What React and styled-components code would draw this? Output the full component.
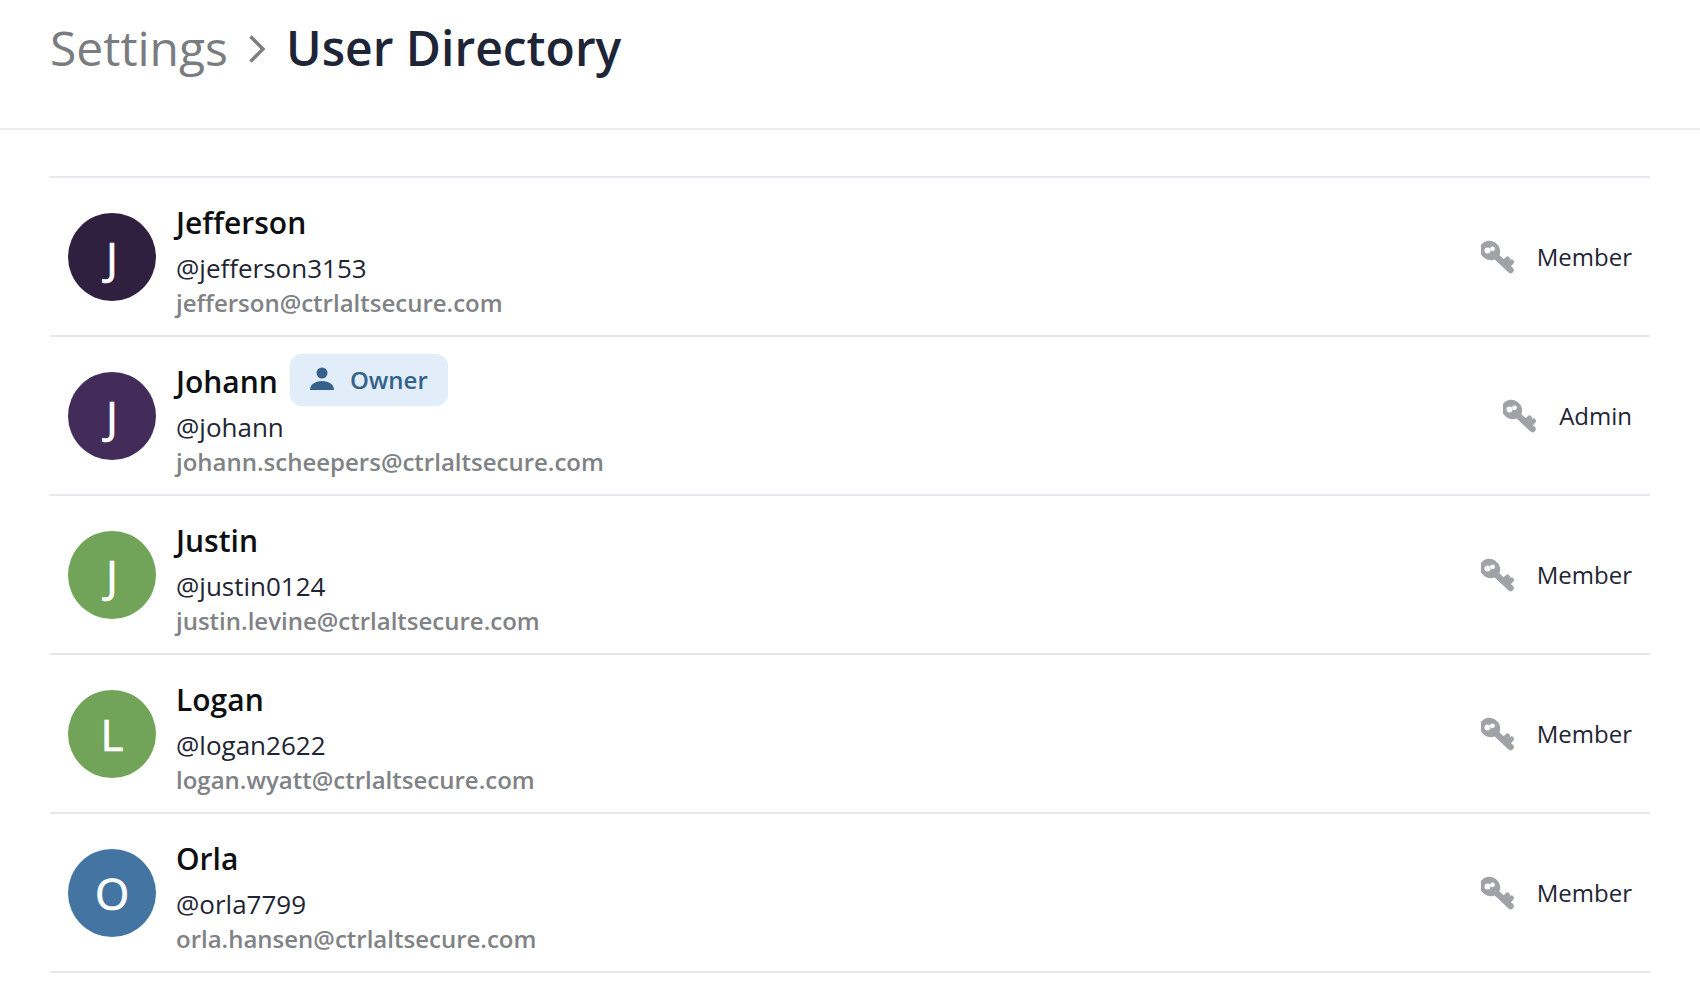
import React from 'react';
import styled, { createGlobalStyle } from 'styled-components';

const GlobalStyle = createGlobalStyle`
  html, body {
    margin: 0;
    background: #fff;
    font-family: 'Open Sans', sans-serif;
  }
`;

const Header = styled.header`
  display: flex;
  align-items: center;
  height: 95px;
  padding: 0 50px 33px;
  border-bottom: 2px solid #ededee;
`;

const Crumb = styled.span`
  font-size: 48px;
  line-height: 60px;
  font-weight: ${props => props.$current ? 600 : 400};
  color: ${props => props.$current ? '#1e2536' : '#7a7c80'};
`;

const Chevron = styled.svg`
  flex: none;
  width: 20px;
  height: 30px;
  margin: 2px 19px 0 19px;
  fill: none;
  stroke: #7c7e82;
  stroke-width: 3.500;
`;

const List = styled.ul`
  list-style: none;
  margin: 46px 50px 0;
  padding: 0;
  border-top: 2px solid #e5e8ec;
`;

const Row = styled.li`
  display: flex;
  align-items: center;
  height: 157px;
  padding: 0 18px;
  border-bottom: 2px solid #e5e8ec;
`;

const Avatar = styled.div`
  display: flex;
  align-items: center;
  justify-content: center;
  flex: none;
  width: 88px;
  height: 88px;
  margin-right: 20px;
  border-radius: 50%;
  background: ${props => props.$color};
  color: #fff;
  font-size: 44px;
  -webkit-text-stroke: 0.7px #fff;
`;

const Info = styled.div`
  flex: 1;
  padding-top: 8px;
`;

const NameLine = styled.div`
  display: flex;
  align-items: center;
  gap: 12px;
  height: 40px;
  padding-top: 1px;
`;

const Name = styled.span`
  font-size: 30px;
  font-weight: 600;
  color: #0e0f12;
`;

const Badge = styled.span`
  display: flex;
  align-items: center;
  gap: 16px;
  box-sizing: border-box;
  height: 52px;
  margin-top: -3px;
  padding: 0 20px 2px;
  border-radius: 12px;
  background: #e1edf9;
  color: #35628a;
  font-size: 24px;
  font-weight: 600;
`;

const BadgeIcon = styled.svg`
  width: 24px;
  height: 24px;
  fill: #35628a;
`;

const Handle = styled.div`
  margin-top: 7px;
  font-size: 26px;
  line-height: 36px;
  color: #1f2533;
`;

const Email = styled.div`
  font-size: 24px;
  line-height: 34px;
  font-weight: 600;
  color: #808286;
`;

const Role = styled.div`
  display: flex;
  align-items: center;
  gap: 20px;
  font-size: 24px;
  color: #1f2533;
`;

const KeyIcon = styled.svg`
  width: 36px;
  height: 36px;
`;

const users = [
  { name: 'Jefferson', handle: 'jefferson3153', email: 'jefferson@ctrlaltsecure.com', role: 'Member', color: '#2f2040', letter: 'J' },
  { name: 'Johann', handle: 'johann', email: 'johann.scheepers@ctrlaltsecure.com', role: 'Admin', color: '#432c59', letter: 'J', owner: true },
  { name: 'Justin', handle: 'justin0124', email: 'justin.levine@ctrlaltsecure.com', role: 'Member', color: '#71a458', letter: 'J' },
  { name: 'Logan', handle: 'logan2622', email: 'logan.wyatt@ctrlaltsecure.com', role: 'Member', color: '#71a458', letter: 'L' },
  { name: 'Orla', handle: 'orla7799', email: 'orla.hansen@ctrlaltsecure.com', role: 'Member', color: '#4475a2', letter: 'O' },
];

const Key = () => (
  <KeyIcon viewBox="1.500 0 36 36">
    <ellipse cx="10.500" cy="11.500" rx="10.500" ry="9.500" transform="rotate(35 10.500 11.500)" fill="#a0a2a8" />
    <path d="M15 16L31 31" stroke="#a0a2a8" strokeWidth="6.500" strokeLinecap="round" />
    <path d="M24 24L28 20M27.500 27.500L32 23" stroke="#a0a2a8" strokeWidth="5" strokeLinecap="round" />
    <circle cx="8" cy="11.500" r="3" fill="#fff" />
    <circle cx="13" cy="9.800" r="2.400" fill="#fff" />
  </KeyIcon>
);

export default function App() {
  return (
    <>
      <GlobalStyle />
      <Header>
        <Crumb>Settings</Crumb>
        <Chevron viewBox="0 0 20 30"><path d="M3.500 2.500L16 15L3.500 27.500" /></Chevron>
        <Crumb $current>User Directory</Crumb>
      </Header>
      <List>
        {users.map(user => (
          <Row key={user.name}>
            <Avatar $color={user.color}>{user.letter}</Avatar>
            <Info>
              <NameLine>
                <Name>{user.name}</Name>
                {user.owner && (
                  <Badge>
                    <BadgeIcon viewBox="0 0 24 24">
                      <circle cx="12" cy="6" r="5.500" />
                      <path d="M0 23c0-5.500 5-9 12-9s12 3.500 12 9z" />
                    </BadgeIcon>
                    Owner
                  </Badge>
                )}
              </NameLine>
              <Handle>@{user.handle}</Handle>
              <Email>{user.email}</Email>
            </Info>
            <Role><Key />{user.role}</Role>
          </Row>
        ))}
      </List>
    </>
  );
}
